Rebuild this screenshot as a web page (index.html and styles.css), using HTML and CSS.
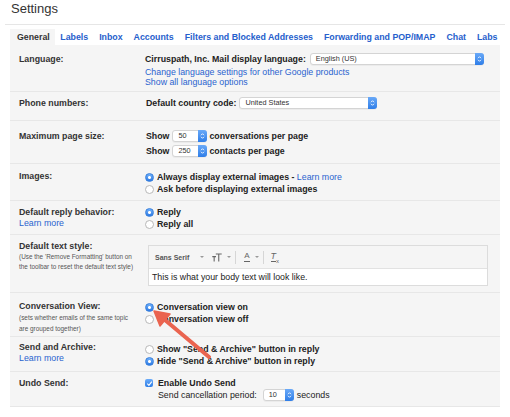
FILE: index.html
```html
<!DOCTYPE html>
<html>
<head>
<meta charset="utf-8">
<link rel="stylesheet" href="styles.css">
</head>
<body>
<div class="page">
  <h1 class="title">Settings</h1>
  <div class="rule"></div>
  <nav class="tabs">
    <span class="tab active">General</span>
    <span class="tab">Labels</span>
    <span class="tab">Inbox</span>
    <span class="tab">Accounts</span>
    <span class="tab">Filters and Blocked Addresses</span>
    <span class="tab">Forwarding and POP/IMAP</span>
    <span class="tab">Chat</span>
    <span class="tab">Labs</span>
  </nav>

  <div class="panel">
    <div class="row r-language">
      <div class="label pt8"><div class="lbl">Language:</div></div>
      <div class="value pt8">
        <div class="line"><b>Cirruspath, Inc. Mail display language:</b>
          <span class="select w-lang"><span class="sel-text">English (US)</span><span class="sel-btn"><svg width="5" height="8" viewBox="0 0 5 8"><path d="M1 3.2 L2.5 1.7 L4 3.2 M1 4.8 L2.5 6.3 L4 4.8" stroke="#fff" stroke-width="0.9" fill="none"/></svg></span></span>
        </div>
        <div class="sub first"><span class="link">Change language settings for other Google products</span></div>
        <div class="sub"><span class="link">Show all language options</span></div>
      </div>
    </div>

    <div class="row r-phone">
      <div class="label pt5"><div class="lbl">Phone numbers:</div></div>
      <div class="value pt5">
        <div class="line"><b class="ind">Default country code:</b>
          <span class="select w-country"><span class="sel-text">United States</span><span class="sel-btn"><svg width="5" height="8" viewBox="0 0 5 8"><path d="M1 3.2 L2.5 1.7 L4 3.2 M1 4.8 L2.5 6.3 L4 4.8" stroke="#fff" stroke-width="0.9" fill="none"/></svg></span></span>
        </div>
      </div>
    </div>

    <div class="row r-page">
      <div class="label pt9"><div class="lbl">Maximum page size:</div></div>
      <div class="value pt9">
        <div class="line"><b class="ind">Show</b>
          <span class="select w-num"><span class="sel-text">50</span><span class="sel-btn"><svg width="5" height="8" viewBox="0 0 5 8"><path d="M1 3.2 L2.5 1.7 L4 3.2 M1 4.8 L2.5 6.3 L4 4.8" stroke="#fff" stroke-width="0.9" fill="none"/></svg></span></span>
          <b class="after">conversations per page</b>
        </div>
        <div class="line second"><b class="ind">Show</b>
          <span class="select w-num"><span class="sel-text">250</span><span class="sel-btn"><svg width="5" height="8" viewBox="0 0 5 8"><path d="M1 3.2 L2.5 1.7 L4 3.2 M1 4.8 L2.5 6.3 L4 4.8" stroke="#fff" stroke-width="0.9" fill="none"/></svg></span></span>
          <b class="after">contacts per page</b>
        </div>
      </div>
    </div>

    <div class="row r-images">
      <div class="label pt6"><div class="lbl">Images:</div></div>
      <div class="value pt7">
        <div class="opt"><span class="radio on"></span><b>Always display external images - </b>&nbsp;<span class="link">Learn more</span></div>
        <div class="opt"><span class="radio"></span><b>Ask before displaying external images</b></div>
      </div>
    </div>

    <div class="row r-reply">
      <div class="label pt5"><div class="lbl">Default reply behavior:</div><div class="link lm">Learn more</div></div>
      <div class="value pt5">
        <div class="opt"><span class="radio on"></span><b>Reply</b></div>
        <div class="opt"><span class="radio"></span><b>Reply all</b></div>
      </div>
    </div>

    <div class="row r-style">
      <div class="label pt5">
        <div class="lbl">Default text style:</div>
        <div class="note n10">(Use the 'Remove Formatting' button on</div>
        <div class="note n10">the toolbar to reset the default text style)</div>
      </div>
      <div class="value pt10">
        <div class="editor">
          <div class="toolbar">
            <span class="tb-font">Sans Serif</span>
            <span class="caret c1"></span>
            <svg class="tb-size" width="10" height="9" viewBox="0 0 10 9"><path d="M0.3 3.6 H4 M2.15 3.6 V8.5 M3.8 1 H9.7 M6.75 1 V8.5" stroke="#666" stroke-width="1.1" fill="none"/></svg>
            <span class="caret c2"></span>
            <span class="sep s1"></span>
            <span class="tb-a">A</span>
            <span class="caret c3"></span>
            <span class="sep s2"></span>
            <span class="tb-tx"><span class="tx-t">T</span><span class="tx-x">x</span></span>
          </div>
          <div class="ed-body">This is what your body text will look like.</div>
        </div>
      </div>
    </div>

    <div class="row r-conv">
      <div class="label pt7">
        <div class="lbl">Conversation View:</div>
        <div class="note n11">(sets whether emails of the same topic</div>
        <div class="note n11">are grouped together)</div>
      </div>
      <div class="value pt8">
        <div class="opt"><span class="radio on"></span><b>Conversation view on</b></div>
        <div class="opt"><span class="radio"></span><b>Conversation view off</b></div>
      </div>
    </div>

    <div class="row r-send">
      <div class="label pt4"><div class="lbl">Send and Archive:</div><div class="link lm2">Learn more</div></div>
      <div class="value pt6">
        <div class="opt"><span class="radio"></span><b>Show "Send &amp; Archive" button in reply</b></div>
        <div class="opt"><span class="radio on"></span><b>Hide "Send &amp; Archive" button in reply</b></div>
      </div>
    </div>

    <div class="row r-undo">
      <div class="label pt5"><div class="lbl">Undo Send:</div></div>
      <div class="value pt5">
        <div class="opt"><span class="check"><svg width="7" height="7" viewBox="0 0 7 7"><path d="M1.3 3.7 L2.9 5.3 L5.8 1.6" stroke="#fff" stroke-width="1.1" fill="none"/></svg></span><b>Enable Undo Send</b></div>
        <div class="line indent">Send cancellation period:
          <span class="select w-ten"><span class="sel-text">10</span><span class="sel-btn"><svg width="5" height="8" viewBox="0 0 5 8"><path d="M1 3.2 L2.5 1.7 L4 3.2 M1 4.8 L2.5 6.3 L4 4.8" stroke="#fff" stroke-width="0.9" fill="none"/></svg></span></span>
          <span class="after2">seconds</span>
        </div>
      </div>
    </div>
  </div>

  <svg class="arrow" width="510" height="417" viewBox="0 0 510 417">
    <line x1="209" y1="357" x2="165" y2="320" stroke="#ea6450" stroke-width="4" stroke-linecap="round"/>
    <polygon points="154,311 170,314 160,326" fill="#ea6450" stroke="#ea6450" stroke-width="1.5" stroke-linejoin="round"/>
  </svg>
</div>
</body>
</html>
```

FILE: styles.css
```css
html, body {
  margin: 0;
  padding: 0;
  background: #fff;
}
body {
  font-family: "Liberation Sans", Arial, sans-serif;
  color: #222;
  font-size: 8.8px;
}
.page {
  position: relative;
  width: 510px;
  height: 417px;
  overflow: hidden;
}
.title {
  margin: 0;
  padding: 1px 0 0 11px;
  height: 24px;
  box-sizing: border-box;
  font-size: 13px;
  line-height: 15px;
  font-weight: normal;
  color: #333;
}
.rule {
  height: 1px;
  background: #e6e6e6;
  margin: 0 5px;
}
.tabs {
  display: flex;
  margin-top: 4px;
  padding-left: 10px;
  height: 16px;
}
.tab {
  font-size: 8.8px;
  font-weight: bold;
  line-height: 17px;
  color: #2660cc;
  padding: 0 5.5px;
  white-space: nowrap;
}
.tab.active {
  background: #f5f5f5;
  color: #333;
  padding-left: 7px;
  padding-right: 5px;
}
.panel {
  margin: 0 10px;
  background: #f5f5f5;
}
.row {
  display: flex;
  box-sizing: border-box;
  border-bottom: 1px solid #e7e7e7;
}
.r-language { height: 47px; }
.r-phone { height: 29px; }
.r-page { height: 43px; }
.r-images { height: 37px; }
.r-reply { height: 34px; }
.r-style { height: 58px; }
.r-conv { height: 44px; }
.r-send { height: 35px; }
.r-undo { height: 35px; }

.label {
  width: 135px;
  box-sizing: border-box;
  padding-left: 9px;
  flex: none;
}
.value {
  flex: 1;
  min-width: 0;
}
.pt4 { padding-top: 4px; }
.pt5 { padding-top: 5px; }
.pt6 { padding-top: 6px; }
.pt7 { padding-top: 7px; }
.pt8 { padding-top: 8px; }
.pt9 { padding-top: 9px; }
.pt10 { padding-top: 10px; }

.lbl {
  font-weight: bold;
  line-height: 12px;
  color: #333;
}
.link {
  color: #2a63cf;
}
.lm {
  line-height: 11px;
}
.lm2 {
  line-height: 11px;
}
.note {
  font-size: 6.4px;
  color: #555;
}
.n10 { line-height: 10px; }
.n11 { line-height: 11px; }
b {
  font-weight: bold;
  color: #222;
}
.line {
  display: flex;
  align-items: center;
  height: 12px;
  white-space: nowrap;
}
.line.second {
  margin-top: 3px;
}
.line.indent {
  padding-left: 13px;
  margin-top: 0;
}
.ind {
  padding-left: 1px;
}
.sub {
  line-height: 10px;
  white-space: nowrap;
}
.sub.first {
  margin-top: 2px;
}
.select {
  display: inline-flex;
  height: 12px;
  box-sizing: border-box;
  border: 1px solid #d4d4d4;
  border-radius: 3px;
  background: #fff;
  margin-left: 4px;
  box-shadow: 0 1px 0 rgba(0, 0, 0, 0.04);
}
.sel-text {
  flex: 1;
  font-size: 7.3px;
  line-height: 10px;
  padding-left: 5px;
  color: #333;
}
.sel-btn {
  width: 9px;
  margin: -1px -1px -1px 0;
  border-radius: 0 3px 3px 0;
  background: linear-gradient(#69a9f8, #2f7ee8);
  display: flex;
  align-items: center;
  justify-content: center;
}
.w-lang { width: 174px; }
.w-country { width: 138px; margin-left: 3px; }
.w-num { width: 35px; margin-left: 3px; }
.w-ten { width: 31px; margin-left: 6px; }
.after { margin-left: 2px; }
.after2 { margin-left: 3px; }

.opt {
  display: flex;
  align-items: center;
  height: 12px;
  white-space: nowrap;
}
.radio {
  width: 9px;
  height: 9px;
  box-sizing: border-box;
  border-radius: 50%;
  border: 1px solid #b8b8b8;
  background: #fff;
  margin-right: 3px;
  flex: none;
}
.radio.on {
  border-color: #3a80dc;
  background: radial-gradient(circle, #fff 0 1.2px, transparent 1.7px), linear-gradient(#70b1fb, #2b79e4);
}
.check {
  width: 8px;
  height: 8px;
  border-radius: 2px;
  background: linear-gradient(#6aabf9, #2e7de6);
  margin-left: 0;
  margin-right: 5px;
  display: flex;
  align-items: center;
  justify-content: center;
  flex: none;
}

.editor {
  margin-left: 3px;
  width: 340px;
  height: 41px;
  box-sizing: border-box;
  border: 1px solid #dcdcdc;
  background: #f5f5f5;
  display: flex;
  flex-direction: column;
}
.toolbar {
  height: 23px;
  display: flex;
  align-items: center;
  padding-left: 6px;
  border-bottom: 1px solid #e2e2e2;
}
.tb-font {
  font-size: 7px;
  font-weight: bold;
  color: #555;
}
.caret {
  width: 0;
  height: 0;
  border-left: 2px solid transparent;
  border-right: 2px solid transparent;
  border-top: 2.5px solid #999;
}
.c1 { margin-left: 11px; }
.tb-size { margin-left: 8px; }
.c2 { margin-left: 5px; }
.c3 { margin-left: 5px; }
.sep {
  width: 1px;
  height: 13px;
  background: #d6d6d6;
}
.s1 { margin-left: 4px; }
.s2 { margin-left: 4px; }
.tb-a {
  margin-left: 8px;
  font-size: 8px;
  line-height: 8px;
  color: #666;
  border-bottom: 1.2px solid #666;
  padding-bottom: 1px;
}
.tb-tx {
  margin-left: 7px;
  display: flex;
  align-items: flex-end;
  color: #666;
}
.tx-t {
  font-style: italic;
  font-size: 9px;
  line-height: 9px;
  border-bottom: 1px solid #666;
}
.tx-x {
  font-size: 6px;
  line-height: 6px;
  margin-bottom: -2px;
}
.ed-body {
  flex: 1;
  background: #fff;
  padding-left: 3px;
  line-height: 16px;
  font-size: 8.8px;
  color: #222;
}

.arrow {
  position: absolute;
  left: 0;
  top: 0;
  pointer-events: none;
}
```
